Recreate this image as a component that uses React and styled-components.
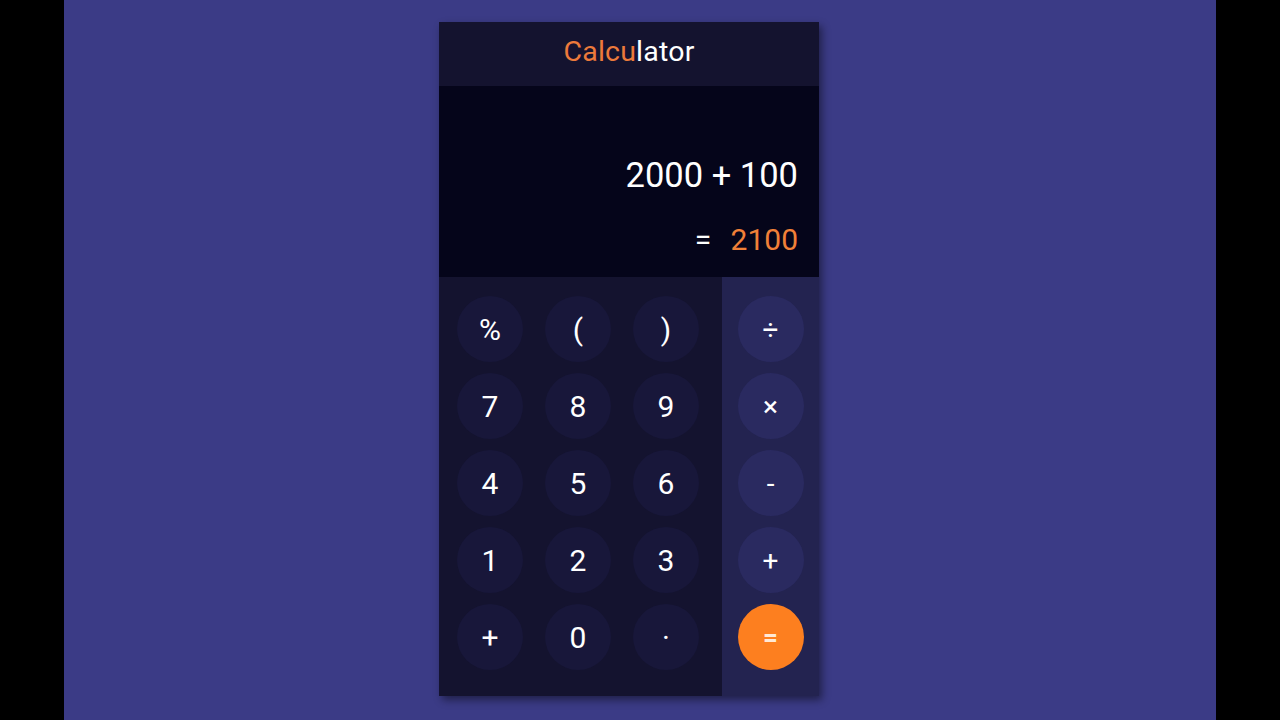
import styled, { createGlobalStyle } from "styled-components";

const GlobalStyle = createGlobalStyle`
    * { box-sizing: border-box; }
    body {
        margin: 0;
        background: #000000;
        font-family: Roboto, "Liberation Sans", sans-serif;
    }
`;

const numberRows = [
    ["%", "(", ")"],
    ["7", "8", "9"],
    ["4", "5", "6"],
    ["1", "2", "3"],
    ["+", "0", "·"],
];

const operators = ["÷", "×", "-", "+"];

export default function App() {
    return (
        <>
            <GlobalStyle />
            <Page>
                <Stage>
                    <Calculator>
                        <Header>
                            <Title>
                                <span>Calcu</span>lator
                            </Title>
                        </Header>
                        <Display>
                            <Expression>2000 + 100</Expression>
                            <Result>
                                = <span>2100</span>
                            </Result>
                        </Display>
                        <Keypad>
                            <Numbers>
                                {numberRows.flat().map((key, i) => (
                                    <Key key={i}>{key}</Key>
                                ))}
                            </Numbers>
                            <Operators>
                                {operators.map((op) => (
                                    <OpKey key={op}>{op}</OpKey>
                                ))}
                                <EqualsKey>=</EqualsKey>
                            </Operators>
                        </Keypad>
                    </Calculator>
                </Stage>
            </Page>
        </>
    );
}

const Page = styled.div`
    width: 1280px;
    height: 720px;
    display: flex;
    justify-content: center;
    background: #000000;
`;

const Stage = styled.div`
    width: 1152px;
    height: 720px;
    background: #3b3b86;
    padding: 22px 0 0 375px;
`;

const Calculator = styled.div`
    width: 380px;
    height: 674px;
    display: flex;
    flex-direction: column;
    background: #14132f;
    box-shadow: 3px 4px 8px rgba(0, 0, 0, 0.45);
`;

const Header = styled.div`
    height: 64px;
    display: flex;
    align-items: center;
    justify-content: center;
    background: #14132f;
`;

const Title = styled.h1`
    margin: 0 0 6px 0;
    font-weight: 400;
    font-size: 28.5px;
    color: #ffffff;
    letter-spacing: 0.2px;
    span {
        color: #ec7a3b;
    }
`;

const Display = styled.div`
    height: 191px;
    display: flex;
    flex-direction: column;
    align-items: flex-end;
    justify-content: flex-end;
    padding: 0 21px 20px 0;
    background: #05051a;
`;

const Expression = styled.div`
    font-size: 34.5px;
    color: #ffffff;
    margin-bottom: 27px;
`;

const Result = styled.div`
    font-size: 30px;
    color: #ffffff;
    white-space: pre;
    span {
        color: #f08038;
        margin-left: 12px;
    }
`;

const Keypad = styled.div`
    flex: 1;
    display: flex;
`;

const Numbers = styled.div`
    width: 283px;
    display: grid;
    grid-template-columns: repeat(3, 66px);
    grid-auto-rows: 66px;
    column-gap: 22px;
    row-gap: 11px;
    padding: 19px 0 0 18px;
    background: #14132f;
`;

const Key = styled.div`
    border-radius: 50%;
    display: flex;
    align-items: center;
    justify-content: center;
    background: #18173a;
    color: #ffffff;
    font-size: 30px;
`;

const Operators = styled.div`
    flex: 1;
    display: flex;
    flex-direction: column;
    align-items: center;
    gap: 11px;
    padding-top: 19px;
    background: #232350;
`;

const OpKey = styled.div`
    width: 66px;
    height: 66px;
    border-radius: 50%;
    display: flex;
    align-items: center;
    justify-content: center;
    background: #2a2a60;
    color: #ffffff;
    font-size: 28px;
`;

const EqualsKey = styled(OpKey)`
    background: #fd7f1f;
    color: #ffe9d6;
    font-size: 26px;
    font-weight: 700;
`;
